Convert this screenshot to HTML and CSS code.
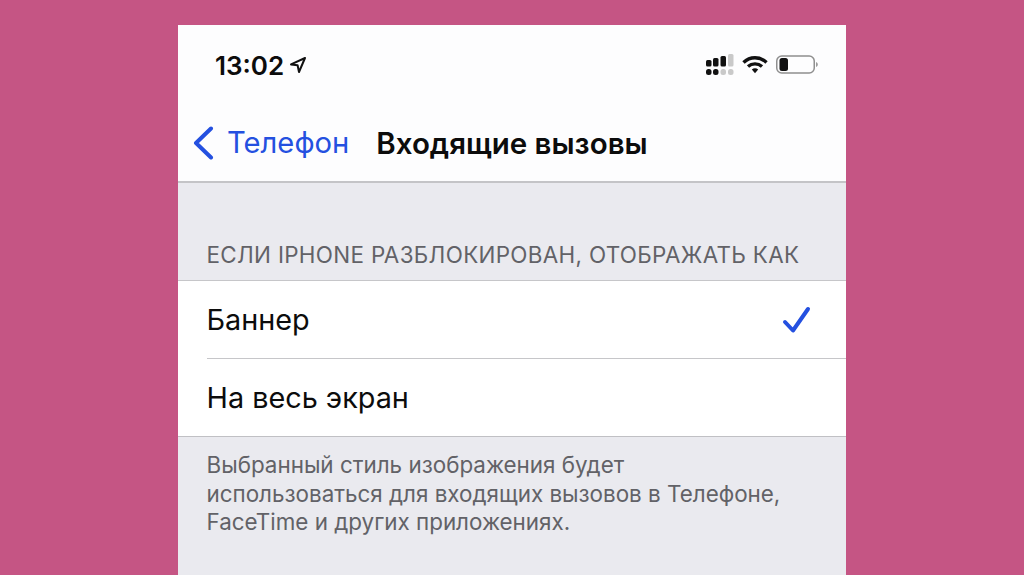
FILE: index.html
```html
<!DOCTYPE html>
<html lang="ru">
  <head>
    <meta charset="utf-8">
    <title>Входящие вызовы</title>
    <link rel="stylesheet" href="styles.css">
  </head>
  <body>
    <div class="phone">
      <div class="top">
        <div class="status">
          <div class="time">13:02
            <svg class="loc" width="18" height="18" viewBox="0 0 18 18"><path d="M16 2 2 8.4l6.6.9L10 16z" fill="none" stroke="#111" stroke-width="2" stroke-linejoin="round"/></svg>
          </div>
          <div class="icons">
            <svg width="28" height="22" viewBox="0 0 28 22">
              <g fill="#111">
                <rect x="0" y="6" width="5.500" height="6.500" rx="1.5"/>
                <rect x="7" y="4" width="5.500" height="8.500" rx="1.5"/>
                <rect x="14.500" y="2" width="5.500" height="10.500" rx="1.5"/>
                <rect x="0" y="15" width="5.500" height="6" rx="2.5"/>
                <rect x="7" y="15" width="5.500" height="6" rx="2.5"/>
              </g>
              <g fill="#c9c9c9">
                <rect x="22" y="0" width="5.500" height="12.500" rx="1.5"/>
                <rect x="14.500" y="15" width="5.500" height="6" rx="2.5"/>
                <rect x="22" y="15" width="5.500" height="6" rx="2.5"/>
              </g>
            </svg>
            <svg width="26" height="20" viewBox="0 0 26 20">
              <g fill="none" stroke="#111" stroke-width="3.4">
                <path d="M1.500 7.500C8 1.200 18 1.200 24.500 7.500"/>
                <path d="M6 11.500C10 8 16 8 20 11.500"/>
              </g>
              <path d="M9.800 14.500 13 18.300 16.200 14.500C14.300 12.800 11.700 12.800 9.800 14.500z" fill="#111"/>
            </svg>
            <svg width="42" height="22" viewBox="0 0 42 22">
              <rect x="0.750" y="2" width="37.500" height="17" rx="5" fill="none" stroke="#8f8f8f" stroke-width="1.500"/>
              <rect x="3.500" y="4" width="8.500" height="13" rx="2.500" fill="#111"/>
              <path d="M40 8c1.300.4 1.800 1.400 1.800 2.500S41.300 12.600 40 13z" fill="#9a9a9a"/>
            </svg>
          </div>
        </div>
        <div class="nav">
          <a class="back">
            <svg width="22" height="34" viewBox="0 0 22 34"><path d="M19 2.500 4 17l15 14.500" fill="none" stroke="#2450e0" stroke-width="4" stroke-linecap="round" stroke-linejoin="round"/></svg>
            <span>Телефон</span>
          </a>
          <div class="title">Входящие вызовы</div>
        </div>
      </div>
      <div class="section-head">ЕСЛИ IPHONE РАЗБЛОКИРОВАН, ОТОБРАЖАТЬ КАК</div>
      <div class="list">
        <div class="row">
          <span class="label">Баннер</span>
          <svg width="30" height="28" viewBox="0 0 30 28"><path d="M4 16 12 24.500 27 3" fill="none" stroke="#2450e0" stroke-width="4" stroke-linecap="round" stroke-linejoin="round"/></svg>
        </div>
        <div class="row">
          <span class="label">На весь экран</span>
        </div>
      </div>
      <div class="note">Выбранный стиль изображения будет<br>использоваться для входящих вызовов в Телефоне,<br>FaceTime и других приложениях.</div>
    </div>
  </body>
</html>
```

FILE: styles.css
```css
html, body {
    height: 100%;
}
body {
    margin: 0;
    padding-top: 25px;
    box-sizing: border-box;
    overflow: hidden;
    background-color: #c55584;
    font-family: 'Inter', 'Noto Sans', sans-serif;
    color: #0c0c0c;
}
.phone {
    width: 668px;
    height: 550px;
    margin-left: 178px;
    background-color: #eaeaef;
}
.top {
    height: 156px;
    background-color: #fdfdfe;
    border-bottom: 2px solid #c4c4c7;
}
.status {
    height: 80px;
    display: flex;
    justify-content: space-between;
    align-items: center;
    padding: 0 28px 0 37px;
}
.time {
    display: flex;
    align-items: center;
    gap: 5px;
    font-size: 26px;
    font-weight: 600;
}
.icons {
    display: flex;
    align-items: center;
    gap: 8px;
}
.nav {
    display: flex;
    align-items: center;
    height: 75px;
    padding-left: 14px;
}
.back {
    display: flex;
    align-items: center;
    gap: 13px;
    font-size: 29.200px;
    color: #2450e0;
}
.title {
    margin-left: 27px;
    font-size: 29.500px;
    font-weight: 600;
}
.section-head {
    height: 97px;
    box-sizing: border-box;
    padding: 58px 28px 0 28.500px;
    font-size: 22.400px;
    letter-spacing: 0.330px;
    color: #626267;
}
.list {
    background-color: #fff;
    border-top: 1px solid #c6c6c9;
    border-bottom: 1px solid #c0c0c4;
    padding-left: 29px;
}
.row {
    height: 77px;
    display: flex;
    justify-content: space-between;
    align-items: center;
    padding-right: 35px;
    font-size: 28.800px;
}
.row + .row {
    border-top: 1px solid #c6c6c9;
}
.label {
    margin-left: -0.500px;
}
.note {
    padding: 14px 28px 0 28.500px;
    font-size: 22.400px;
    line-height: 28.500px;
    color: #626267;
}
```
